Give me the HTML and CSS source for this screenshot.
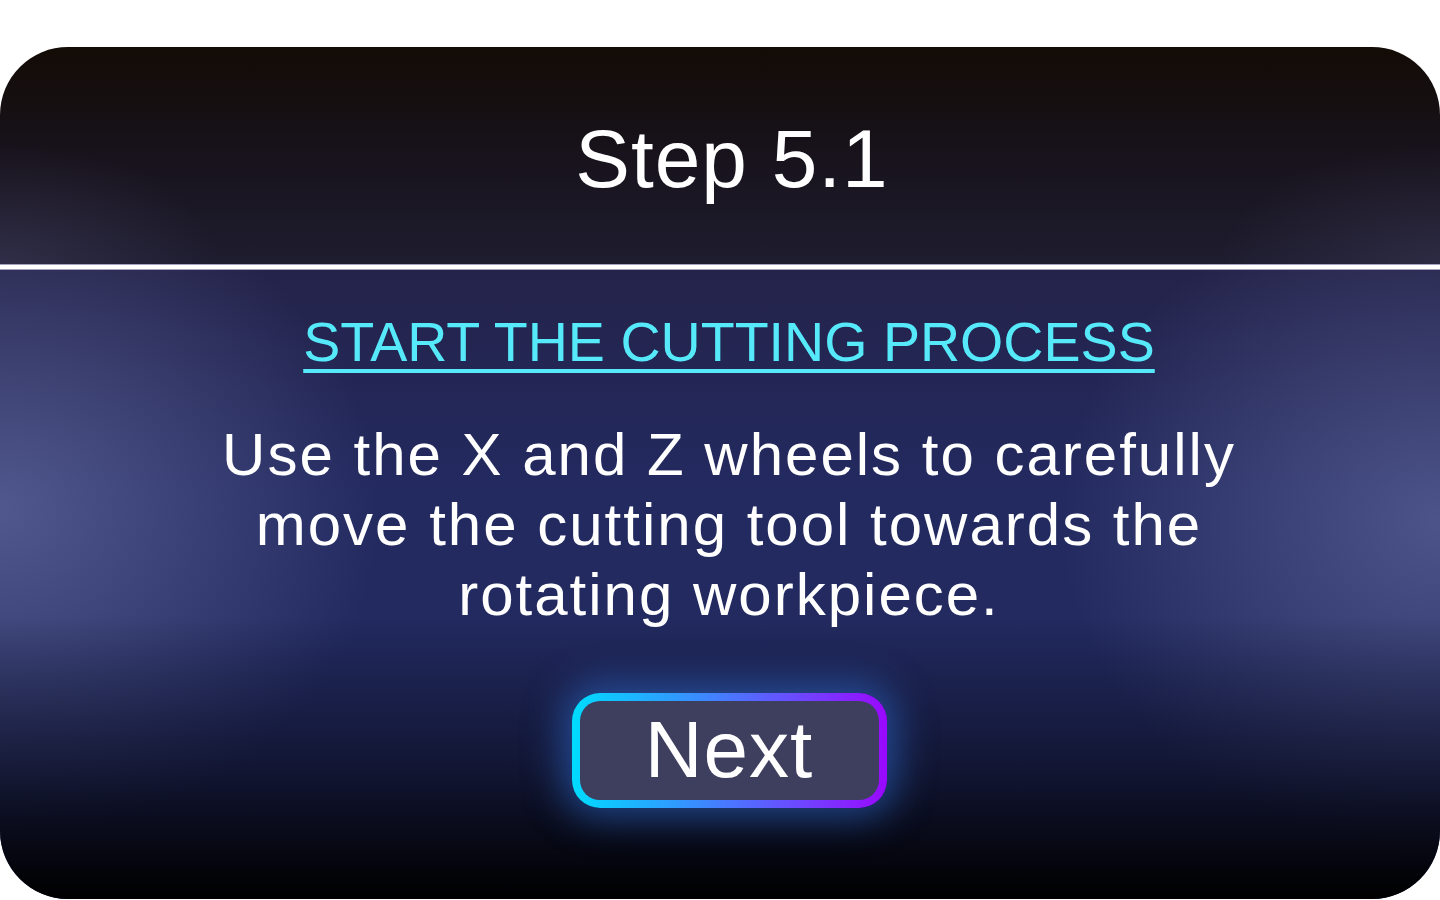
FILE: index.html
```html
<!DOCTYPE html>
<html lang="en">
<head>
<meta charset="utf-8">
<title>Step 5.1</title>
<link rel="stylesheet" href="styles.css">
</head>
<body>
  <main class="panel">
    <header class="panel-head">
      <h1 class="step-title">Step 5.1</h1>
    </header>
    <div class="divider"></div>
    <section class="panel-body">
      <h2 class="step-heading">START THE CUTTING PROCESS</h2>
      <p class="step-text">Use the X and Z wheels to carefully move the cutting tool towards the rotating workpiece.</p>
      <button class="next-btn" type="button">Next</button>
    </section>
  </main>
</body>
</html>
```

FILE: styles.css
```css
html, body {
  margin: 0;
  padding: 0;
  background: #ffffff;
  font-family: "Liberation Sans", Arial, sans-serif;
}

.panel {
  margin-top: 47px;
  height: 852px;
  width: 1440px;
  border-radius: 68px;
  overflow: hidden;
  display: flex;
  flex-direction: column;
}

.panel-head {
  height: 217px;
  flex: none;
  box-sizing: border-box;
  padding-top: 71px;
  padding-left: 24px;
  text-align: center;
  background:
    radial-gradient(ellipse 220px 120px at 0% 100%, rgba(90, 88, 130, 0.3), rgba(90, 88, 130, 0) 100%),
    radial-gradient(ellipse 220px 120px at 100% 100%, rgba(90, 88, 130, 0.25), rgba(90, 88, 130, 0) 100%),
    linear-gradient(to bottom, #130b05 0%, #17121a 45%, #1e1c2f 100%);
}

.step-title {
  margin: 0;
  color: #ffffff;
  font-size: 82px;
  font-weight: 400;
  line-height: 1;
  letter-spacing: 1px;
}

.divider {
  flex: none;
  height: 4px;
  background: #ffffff;
  border-top: 1px solid #a6a4bc;
  border-bottom: 1px solid #a6a4bc;
}

.panel-body {
  flex: 1;
  display: flex;
  flex-direction: column;
  align-items: center;
  padding-top: 45px;
  padding-left: 18px;
  background:
    linear-gradient(to bottom, rgba(0, 0, 0, 0) 55%, rgba(6, 8, 20, 0.5) 78%, #000000 100%),
    radial-gradient(ellipse 380px 330px at 0% 38%, rgba(110, 118, 170, 0.6), rgba(110, 118, 170, 0) 100%),
    radial-gradient(ellipse 380px 330px at 100% 40%, rgba(110, 118, 170, 0.55), rgba(110, 118, 170, 0) 100%),
    linear-gradient(to bottom, #24234a 0%, #232a60 35%, #222a60 60%, #1c2250 100%);
}

.step-heading {
  margin: 0;
  color: #55e9fa;
  font-size: 55.6px;
  font-weight: 400;
  line-height: 1;
  text-decoration: underline;
  text-decoration-thickness: 4px;
  text-underline-offset: 8px;
}

.step-text {
  margin: 49px 0 0;
  max-width: 1100px;
  color: #ffffff;
  font-size: 60px;
  line-height: 70px;
  letter-spacing: 2px;
  text-align: center;
}

.next-btn {
  margin-top: 63px;
  width: 315px;
  height: 115px;
  box-sizing: border-box;
  border: 8px solid transparent;
  border-radius: 28px;
  padding: 0;
  background:
    linear-gradient(#3e3e5e, #3e3e5e) padding-box,
    linear-gradient(90deg, #00dcff 0%, #3a8cff 40%, #6a4cff 70%, #9a08ff 100%) border-box;
  box-shadow: 0 0 36px 10px rgba(50, 120, 230, 0.5);
  color: #ffffff;
  font-family: "Liberation Sans", Arial, sans-serif;
  font-size: 80px;
  line-height: 1;
  letter-spacing: 1px;
  cursor: pointer;
}
```
